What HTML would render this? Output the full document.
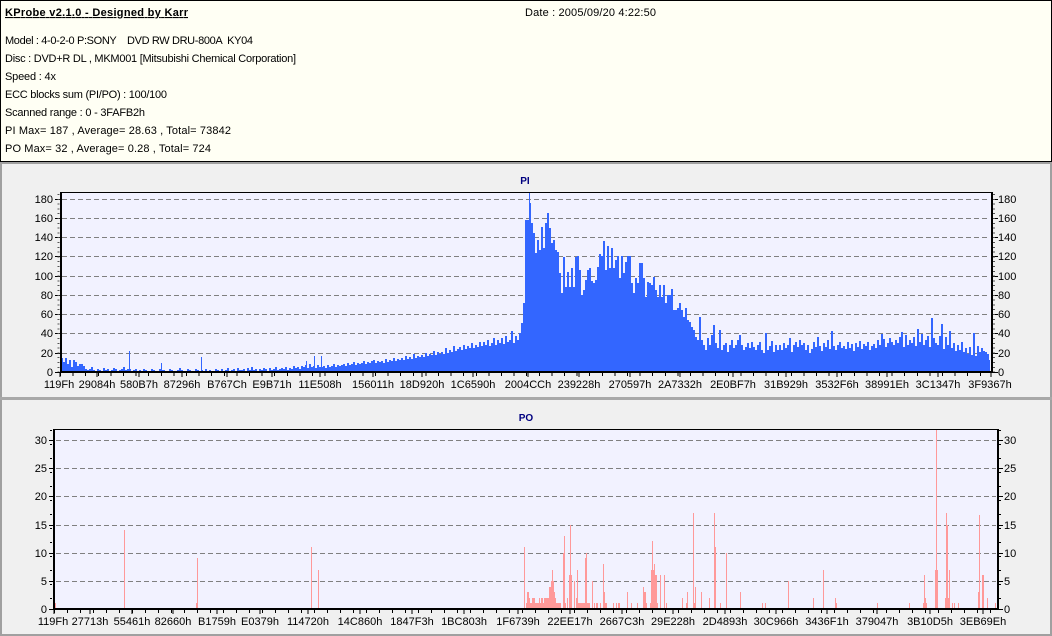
<!DOCTYPE html>
<html><head><meta charset="utf-8"><title>KProbe</title>
<style>
html,body{margin:0;padding:0;background:#f0f0f0;width:1052px;height:636px;overflow:hidden}
svg{display:block}
text{font-family:"Liberation Sans",sans-serif;font-size:11px;fill:#000}
.b{font-weight:bold}
.t{font-weight:bold;fill:#000080;font-size:10px;text-anchor:middle}
.m{text-anchor:middle}
.e{text-anchor:end}
</style></head><body>
<svg width="1052" height="636" viewBox="0 0 1052 636" xmlns="http://www.w3.org/2000/svg">
<!-- header panel -->
<rect x="0.5" y="0.5" width="1051" height="161" fill="#fffff4" stroke="#000"/>
<text x="5" y="16" class="b" textLength="183" lengthAdjust="spacing" text-decoration="underline">KProbe v2.1.0 - Designed by Karr</text>
<text x="525" y="16" textLength="131" lengthAdjust="spacing">Date : 2005/09/20 4:22:50</text>
<text x="5" y="44" textLength="248" lengthAdjust="spacing" xml:space="preserve">Model : 4-0-2-0 P:SONY    DVD RW DRU-800A  KY04</text>
<text x="5" y="62" textLength="291" lengthAdjust="spacing">Disc : DVD+R DL , MKM001 [Mitsubishi Chemical Corporation]</text>
<text x="5" y="80" textLength="51" lengthAdjust="spacing">Speed : 4x</text>
<text x="5" y="98" textLength="162" lengthAdjust="spacing">ECC blocks sum (PI/PO) : 100/100</text>
<text x="5" y="116" textLength="140" lengthAdjust="spacing">Scanned range : 0 - 3FAFB2h</text>
<text x="5" y="134" textLength="226" lengthAdjust="spacing">PI Max= 187 , Average= 28.63 , Total= 73842</text>
<text x="5" y="152" textLength="206" lengthAdjust="spacing">PO Max= 32 , Average= 0.28 , Total= 724</text>

<!-- panel frames -->
<path d="M0 162.5H1052M0 163.5H1052" stroke="#a0a0a0" fill="none"/>
<rect x="0" y="164" width="2" height="472" fill="#a0a0a0"/>
<rect x="1050" y="164" width="2" height="472" fill="#a0a0a0"/>
<rect x="0" y="397" width="1052" height="3" fill="#a8a8a8"/>
<rect x="0" y="634" width="1052" height="2" fill="#a0a0a0"/>

<!-- PI chart -->
<text x="525" y="184" class="t">PI</text>
<rect x="60" y="192" width="932" height="180" fill="#f2f2ff"/>
<path shape-rendering="crispEdges" stroke="#808080" stroke-dasharray="5 3" fill="none" d="M62 199.5H990M62 218.5H990M62 237.5H990M62 256.5H990M62 276.5H990M62 295.5H990M62 314.5H990M62 333.5H990M62 353.5H990"/>
<path shape-rendering="crispEdges" fill="#3366ff" d="
M61 372V358h2V362h2V358h2V364h2V360h2V367h2V360h2V362h2V366h2V364h2V372Z
M81 372V364h2V366h2V369h2V370h2V369h2V367h2V370h2V371h2V369h2V370h2V372Z
M101 372V371h2V368h2V370h2V369h2V371h2V370h2V368h2V369h2V371h2V370h2V372Z
M121 372V369h2V367h2V370h2V369h2V369h2V371h2V370h2V369h2V372h2V370h2V372Z
M141 372V371h2V369h2V370h2V372h2V371h2V369h2V370h2V371h2V372h2V369h2V372Z
M161 372V370h2V370h2V371h2V372h2V369h2V370h2V371h2V372h2V370h2V368h2V372Z
M181 372V370h2V372h2V371h2V369h2V370h2V372h2V371h2V369h2V370h2V372h2V372Z
M201 372V370h2V371h2V369h2V372h2V370h2V371h2V372h2V369h2V370h2V371h2V372Z
M221 372V369h2V371h2V370h2V368h2V371h2V370h2V369h2V371h2V368h2V370h2V372Z
M241 372V370h2V369h2V371h2V368h2V370h2V367h2V370h2V369h2V371h2V369h2V372Z
M261 372V370h2V368h2V369h2V371h2V368h2V370h2V369h2V367h2V370h2V369h2V372Z
M281 372V368h2V369h2V367h2V370h2V368h2V369h2V366h2V368h2V367h2V369h2V372Z
M301 372V366h2V367h2V365h2V368h2V364h2V367h2V366h2V368h2V365h2V367h2V372Z
M321 372V367h2V366h2V368h2V365h2V367h2V366h2V364h2V367h2V365h2V366h2V372Z
M341 372V365h2V364h2V366h2V363h2V365h2V364h2V362h2V365h2V363h2V364h2V372Z
M361 372V363h2V361h2V364h2V362h2V363h2V361h2V360h2V363h2V361h2V362h2V372Z
M381 372V361h2V363h2V359h2V362h2V360h2V361h2V358h2V361h2V359h2V360h2V372Z
M401 372V358h2V360h2V356h2V359h2V357h2V359h2V354h2V358h2V356h2V357h2V372Z
M421 372V355h2V357h2V353h2V356h2V354h2V355h2V351h2V355h2V352h2V354h2V372Z
M441 372V352h2V354h2V348h2V353h2V350h2V352h2V346h2V351h2V349h2V347h2V372Z
M461 372V350h2V345h2V349h2V346h2V348h2V343h2V348h2V345h2V347h2V342h2V372Z
M481 372V346h2V342h2V345h2V340h2V346h2V343h2V338h2V345h2V340h2V343h2V372Z
M501 372V338h2V344h2V336h2V342h2V340h2V331h2V343h2V336h2V340h2V333h2V372Z
M521 372V323h2V303h2V220h2V220h2V203h2V223h2V233h2V253h2V240h2V250h2V372Z
M541 372V227h2V248h2V223h2V213h2V228h2V243h2V240h2V250h2V252h2V273h2V372Z
M561 372V293h2V257h2V287h2V272h2V287h2V268h2V287h2V257h2V256h2V270h2V372Z
M581 372V295h2V290h2V280h2V270h2V268h2V281h2V283h2V280h2V267h2V254h2V372Z
M601 372V256h2V241h2V270h2V246h2V268h2V248h2V268h2V260h2V256h2V278h2V372Z
M621 372V256h2V273h2V262h2V256h2V256h2V283h2V293h2V278h2V283h2V263h2V372Z
M641 372V263h2V278h2V297h2V282h2V283h2V285h2V277h2V290h2V297h2V285h2V372Z
M661 372V297h2V285h2V303h2V295h2V295h2V289h2V310h2V310h2V308h2V303h2V372Z
M681 372V310h2V317h2V308h2V320h2V322h2V327h2V330h2V337h2V340h2V317h2V372Z
M701 372V340h2V345h2V350h2V338h2V345h2V335h2V325h2V343h2V348h2V330h2V372Z
M721 372V350h2V345h2V343h2V352h2V345h2V340h2V348h2V345h2V340h2V335h2V372Z
M741 372V345h2V350h2V347h2V343h2V348h2V342h2V347h2V350h2V345h2V342h2V372Z
M761 372V350h2V353h2V333h2V350h2V346h2V341h2V352h2V345h2V350h2V345h2V372Z
M781 372V350h2V343h2V348h2V345h2V338h2V352h2V345h2V342h2V347h2V340h2V372Z
M801 372V345h2V343h2V350h2V345h2V353h2V349h2V342h2V347h2V337h2V346h2V372Z
M821 372V351h2V343h2V347h2V340h2V349h2V331h2V346h2V350h2V345h2V342h2V372Z
M841 372V348h2V346h2V349h2V342h2V348h2V344h2V351h2V343h2V347h2V341h2V372Z
M861 372V349h2V344h2V346h2V342h2V350h2V346h2V344h2V348h2V340h2V345h2V372Z
M881 372V334h2V339h2V347h2V343h2V338h2V342h2V345h2V340h2V343h2V337h2V372Z
M901 372V332h2V347h2V335h2V345h2V340h2V343h2V337h2V346h2V329h2V342h2V372Z
M921 372V334h2V345h2V340h2V336h2V347h2V318h2V338h2V343h2V345h2V336h2V372Z
M941 372V324h2V349h2V337h2V345h2V331h2V348h2V343h2V351h2V345h2V350h2V372Z
M961 372V342h2V352h2V348h2V354h2V347h2V355h2V333h2V356h2V346h2V352h2V372Z
M981 372V348h2V351h2V352h2V354h2V360h1V372Z
M129 372V351h1V372ZM161 372V363h1V372ZM201 372V357h1V372ZM306 372V361h1V372ZM314 372V356h1V372ZM321 372V356h1V372Z
M525 372V280h1V372ZM529 372V192h1V372Z"/>
<rect x="60" y="192" width="933" height="1" fill="#000"/>
<rect x="60" y="371" width="933" height="2" fill="#000"/>
<rect x="60" y="192" width="2" height="181" fill="#000"/>
<rect x="991" y="192" width="2" height="181" fill="#000"/>
<!-- PI ticks -->
<path shape-rendering="crispEdges" stroke="#000" fill="none" d="M55 199.5H60M55 218.5H60M55 237.5H60M55 256.5H60M55 276.5H60M55 295.5H60M55 314.5H60M55 333.5H60M55 353.5H60M55 372.5H60M993 199.5H998M993 218.5H998M993 237.5H998M993 256.5H998M993 276.5H998M993 295.5H998M993 314.5H998M993 333.5H998M993 353.5H998M993 372.5H998"/>
<line x1="58.5" y1="194" x2="58.5" y2="372" stroke="#555" stroke-width="2" stroke-dasharray="1 3.8" shape-rendering="crispEdges"/>
<line x1="994" y1="194" x2="994" y2="372" stroke="#555" stroke-width="2" stroke-dasharray="1 3.8" shape-rendering="crispEdges"/>
<path shape-rendering="crispEdges" stroke="#000" fill="none" d="M60 377V373M97 377V373M139 377V373M182 377V373M227 377V373M272 377V373M320 377V373M373 377V373M422 377V373M473 377V373M528 377V373M579 377V373M630 377V373M680 377V373M733 377V373M786 377V373M837 377V373M887 377V373M938 377V373M991 377V373"/>
<line x1="60" y1="374.5" x2="992" y2="374.5" stroke="#000" stroke-width="3" stroke-dasharray="1 11.6" shape-rendering="crispEdges"/>
<text class="e" x="53" y="203">180</text><text class="e" x="53" y="222">160</text><text class="e" x="53" y="241">140</text><text class="e" x="53" y="260">120</text><text class="e" x="53" y="280">100</text><text class="e" x="53" y="299">80</text><text class="e" x="53" y="318">60</text><text class="e" x="53" y="337">40</text><text class="e" x="53" y="357">20</text><text class="e" x="53" y="376">0</text>
<text x="998" y="203">180</text><text x="998" y="222">160</text><text x="998" y="241">140</text><text x="998" y="260">120</text><text x="998" y="280">100</text><text x="998" y="299">80</text><text x="998" y="318">60</text><text x="998" y="337">40</text><text x="998" y="357">20</text><text x="998" y="376">0</text>
<text class="m" x="59" y="388">119Fh</text><text class="m" x="97" y="388">29084h</text><text class="m" x="139" y="388">580B7h</text><text class="m" x="182" y="388">87296h</text><text class="m" x="227" y="388">B767Ch</text><text class="m" x="272" y="388">E9B71h</text><text class="m" x="320" y="388">11E508h</text><text class="m" x="373" y="388">156011h</text><text class="m" x="422" y="388">18D920h</text><text class="m" x="473" y="388">1C6590h</text><text class="m" x="528" y="388">2004CCh</text><text class="m" x="579" y="388">239228h</text><text class="m" x="630" y="388">270597h</text><text class="m" x="680" y="388">2A7332h</text><text class="m" x="733" y="388">2E0BF7h</text><text class="m" x="786" y="388">31B929h</text><text class="m" x="837" y="388">3532F6h</text><text class="m" x="887" y="388">38991Eh</text><text class="m" x="938" y="388">3C1347h</text><text class="m" x="990" y="388">3F9367h</text>

<!-- PO chart -->
<text x="526" y="421" class="t">PO</text>
<rect x="54" y="430" width="944" height="179" fill="#f2f2ff"/>
<path shape-rendering="crispEdges" stroke="#808080" stroke-dasharray="5 3" fill="none" d="M56 440.5H996M56 468.5H996M56 496.5H996M56 525.5H996M56 553.5H996M56 581.5H996"/>
<path shape-rendering="crispEdges" fill="#ff9999" d="
M55 608V603h1V608ZM124 608V530h1V608ZM196 608V603h1V608ZM197 608V558h1V608ZM311 608V547h1V608ZM318 608V570h1V608ZM524 608V547h1V608Z
M526 608V603h1V592h2V598h1V603h2V598h3V603h2V603h2V598h1V603h1V598h2V603h1V598h3V598h2V587h2V581h1V570h1V581h1V592h1V598h1V603h5V608Z
M563 608V553h1V536h1V603h1V608ZM567 608V598h1V608ZM569 608V575h1V525h1V575h1V608ZM574 608V581h1V608ZM576 608V598h1V608ZM577 608V570h1V603h7V558h1V553h1V603h3V608Z
M592 608V581h1V608ZM594 608V603h1V608ZM596 608V603h2V608ZM600 608V603h1V608ZM603 608V564h1V592h1V603h2V608Z
M613 608V603h1V608ZM616 608V603h1V608ZM618 608V603h2V608ZM627 608V592h1V608ZM631 608V603h1V608ZM637 608V603h1V608Z
M643 608V587h1V592h2V603h1V608ZM650 608V603h1V570h1V541h1V570h1V564h1V575h2V603h1V608ZM660 608V575h1V608ZM664 608V575h1V608ZM666 608V603h1V608Z
M682 608V598h1V608ZM686 608V603h1V592h1V608ZM693 608V513h1V603h1V587h1V608ZM701 608V592h1V608ZM709 608V598h1V608ZM714 608V513h1V547h1V608ZM720 608V603h1V608ZM726 608V553h1V608ZM740 608V592h1V608Z
M762 608V603h1V608ZM765 608V603h1V608ZM788 608V581h1V608ZM813 608V598h1V608ZM823 608V570h1V608ZM835 608V598h1V603h1V608ZM877 608V603h1V608ZM909 608V603h1V608Z
M923 608V603h1V575h1V598h1V603h1V608ZM935 608V570h1V430h1V570h1V608ZM945 608V598h1V513h1V525h1V598h1V570h1V608ZM952 608V603h1V608ZM954 608V603h1V608ZM958 608V603h1V608Z
M978 608V592h1V515h1V608ZM982 608V575h2V608ZM987 608V598h1V608ZM995 608V603h1V608Z"/>
<rect x="53" y="429" width="945" height="1" fill="#000"/>
<rect x="53" y="608" width="945" height="2" fill="#000"/>
<rect x="53" y="429" width="2" height="181" fill="#000"/>
<rect x="997" y="429" width="2" height="181" fill="#000"/>
<!-- PO ticks -->
<path shape-rendering="crispEdges" stroke="#000" fill="none" d="M49 440.5H53M49 468.5H53M49 496.5H53M49 525.5H53M49 553.5H53M49 581.5H53M49 609.5H53M999 440.5H1003M999 468.5H1003M999 496.5H1003M999 525.5H1003M999 553.5H1003M999 581.5H1003M999 609.5H1003"/>
<line x1="51" y1="430" x2="51" y2="608" stroke="#000" stroke-width="2" stroke-dasharray="1 13" shape-rendering="crispEdges"/>
<line x1="1000" y1="430" x2="1000" y2="608" stroke="#000" stroke-width="2" stroke-dasharray="1 13" shape-rendering="crispEdges"/>
<path shape-rendering="crispEdges" stroke="#000" fill="none" d="M54 614V610M90 614V610M132 614V610M173 614V610M217 614V610M260 614V610M308 614V610M360 614V610M412 614V610M464 614V610M518 614V610M570 614V610M622 614V610M673 614V610M725 614V610M776 614V610M827 614V610M877 614V610M930 614V610M983 614V610"/>
<line x1="54" y1="611.5" x2="998" y2="611.5" stroke="#000" stroke-width="3" stroke-dasharray="1 12" shape-rendering="crispEdges"/>
<text class="e" x="47" y="444">30</text><text class="e" x="47" y="472">25</text><text class="e" x="47" y="500">20</text><text class="e" x="47" y="529">15</text><text class="e" x="47" y="557">10</text><text class="e" x="47" y="585">5</text><text class="e" x="47" y="613">0</text>
<text x="1004" y="444">30</text><text x="1004" y="472">25</text><text x="1004" y="500">20</text><text x="1004" y="529">15</text><text x="1004" y="557">10</text><text x="1004" y="585">5</text><text x="1004" y="613">0</text>
<text class="m" x="53" y="625">119Fh</text><text class="m" x="90" y="625">27713h</text><text class="m" x="132" y="625">55461h</text><text class="m" x="173" y="625">82660h</text><text class="m" x="217" y="625">B1759h</text><text class="m" x="260" y="625">E0379h</text><text class="m" x="308" y="625">114720h</text><text class="m" x="360" y="625">14C860h</text><text class="m" x="412" y="625">1847F3h</text><text class="m" x="464" y="625">1BC803h</text><text class="m" x="518" y="625">1F6739h</text><text class="m" x="570" y="625">22EE17h</text><text class="m" x="622" y="625">2667C3h</text><text class="m" x="673" y="625">29E228h</text><text class="m" x="725" y="625">2D4893h</text><text class="m" x="776" y="625">30C966h</text><text class="m" x="827" y="625">3436F1h</text><text class="m" x="877" y="625">379047h</text><text class="m" x="930" y="625">3B10D5h</text><text class="m" x="983" y="625">3EB69Eh</text>
</svg>
</body></html>
